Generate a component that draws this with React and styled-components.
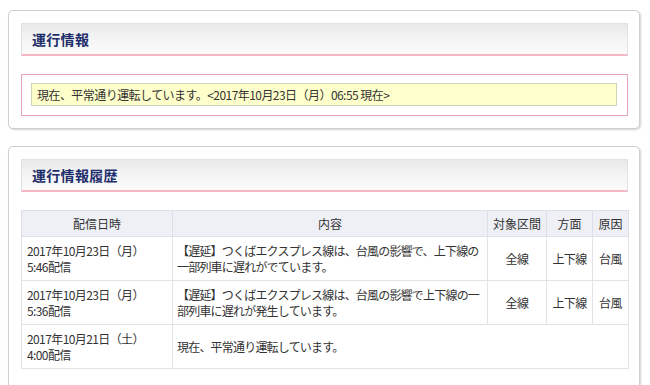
import React from "react";
import styled, { createGlobalStyle } from "styled-components";

const Global = createGlobalStyle`
  html, body { margin: 0; padding: 0; background: #fff; }
  body {
    font-family: "Noto Sans CJK JP", "DejaVu Sans", sans-serif;
    font-size: 12px;
    color: #333;
  }
`;

const Page = styled.div`
  width: 632px;
  padding: 10px 0 0 8px;
  display: flex;
  flex-direction: column;
  gap: 17px;
`;

const Card = styled.section`
  border: 1px solid #cfcfcf;
  border-radius: 5px;
  box-shadow: 1px 1px 2px rgba(0, 0, 0, 0.18);
  background: #fff;
  padding: 12px 11px ${(p) => p.$pb || 12}px 12px;
  display: flex;
  flex-direction: column;
  gap: 18px;
`;

const Header = styled.h2`
  margin: 0;
  height: 30px;
  box-sizing: content-box;
  border: 1px solid #e2e2e2;
  border-bottom: 2px solid #f2b9c5;
  background: linear-gradient(to bottom, #e9e9e9 0%, #f4f4f4 50%, #fbfbfb 100%);
  display: flex;
  align-items: center;
  padding-left: 10px;
  font-size: 14px;
  font-weight: bold;
  color: #1d2d6b;
  letter-spacing: 0.3px;
`;

const StatusFrame = styled.div`
  border: 1px solid #e6a7b7;
  padding: 8px 10px 9px 9px;
`;

const StatusNote = styled.div`
  background: #ffffcc;
  border: 1px solid #c9d7b5;
  height: 21px;
  display: flex;
  align-items: center;
  padding-left: 5px;
  font-size: 12px;
  letter-spacing: -0.55px;
  color: #333;
`;

const Table = styled.table`
  width: 100%;
  border-collapse: collapse;
  table-layout: fixed;
  font-size: 12px;
  color: #333;
`;

const Th = styled.th`
  background: #eef0f6;
  border: 1px solid #dde0ea;
  font-weight: normal;
  height: 25px;
  padding: 0;
  text-align: center;
  white-space: nowrap;
`;

const Td = styled.td`
  border: 1px solid #e2e4ea;
  padding: 0 5px;
  height: 43px;
  line-height: 16px;
  letter-spacing: -0.6px;
  text-align: left;
  vertical-align: middle;
`;

const BodyTd = styled(Td)`
  padding: 0 2px 0 4px;
  letter-spacing: -0.8px;
`;

const CenterTd = styled(Td)`
  padding: 0;
  text-align: center;
  white-space: nowrap;
`;

const rows = [
  {
    date: "2017年10月23日（月）",
    time: "5:46配信",
    body: "【遅延】つくばエクスプレス線は、台風の影響で、上下線の一部列車に遅れがでています。",
    area: "全線",
    dir: "上下線",
    cause: "台風",
  },
  {
    date: "2017年10月23日（月）",
    time: "5:36配信",
    body: "【遅延】つくばエクスプレス線は、台風の影響で上下線の一部列車に遅れが発生しています。",
    area: "全線",
    dir: "上下線",
    cause: "台風",
  },
  {
    date: "2017年10月21日（土）",
    time: "4:00配信",
    body: "現在、平常通り運転しています。",
  },
];

export default function App() {
  return (
    <>
      <Global />
      <Page>
        <Card>
          <Header>運行情報</Header>
          <StatusFrame>
            <StatusNote>現在、平常通り運転しています。&lt;2017年10月23日（月）06:55 現在&gt;</StatusNote>
          </StatusFrame>
        </Card>
        <Card $pb={20}>
          <Header>運行情報履歴</Header>
          <Table>
            <colgroup>
              <col style={{ width: 151 }} />
              <col style={{ width: 315 }} />
              <col style={{ width: 59 }} />
              <col style={{ width: 46 }} />
              <col style={{ width: 36 }} />
            </colgroup>
            <thead>
              <tr>
                <Th>配信日時</Th>
                <Th>内容</Th>
                <Th>対象区間</Th>
                <Th>方面</Th>
                <Th>原因</Th>
              </tr>
            </thead>
            <tbody>
              {rows.map((r, i) => (
                <tr key={i}>
                  <Td>
                    {r.date}
                    <br />
                    {r.time}
                  </Td>
                  {r.area ? (
                    <>
                      <BodyTd>{r.body}</BodyTd>
                      <CenterTd>{r.area}</CenterTd>
                      <CenterTd>{r.dir}</CenterTd>
                      <CenterTd>{r.cause}</CenterTd>
                    </>
                  ) : (
                    <BodyTd colSpan={4}>{r.body}</BodyTd>
                  )}
                </tr>
              ))}
            </tbody>
          </Table>
        </Card>
      </Page>
    </>
  );
}
